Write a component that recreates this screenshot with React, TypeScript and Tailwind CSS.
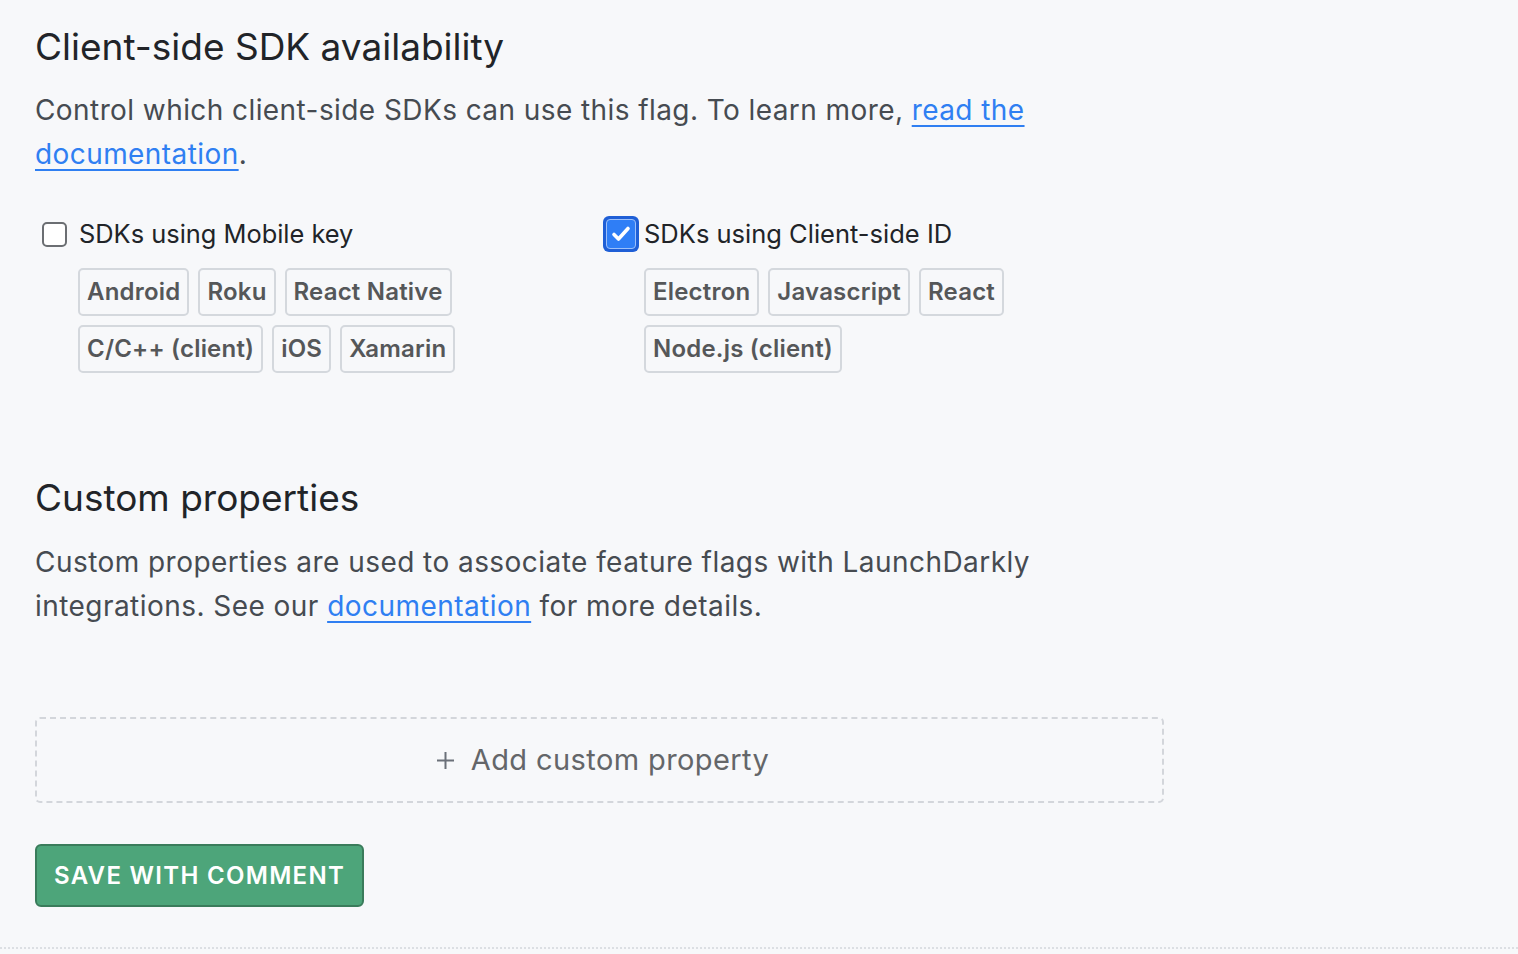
import React from "react";

const Tag = ({ children }: { children: React.ReactNode }) => (
  <span className="inline-flex h-[48px] items-center rounded-[5px] border-2 border-[#d4d8dd] px-[7px] text-[24px] font-semibold tracking-[0.2px] text-[#555759]">
    {children}
  </span>
);

export default function App() {
  return (
    <div
      className="min-h-screen bg-[#f7f8fa] pl-[35px] pt-[25px]"
      style={{ fontFamily: "Inter, 'Noto Sans', sans-serif" }}
    >
      <h2 className="text-[37px] leading-[44px] font-normal text-[#212428]">Client-side SDK availability</h2>
      <p className="mt-[19px] w-[1050px] text-[28px] leading-[44px] tracking-[0.42px] text-[#464b51]">
        Control which client-side SDKs can use this flag. To learn more,{" "}
        <a className="text-[#2f7ff2] underline underline-offset-[5px] decoration-2" href="#">read the documentation</a>.
      </p>

      <div className="mt-[40px] flex">
        <div className="w-[568px] pl-[7px]">
          <div className="flex h-[36px] items-center gap-[12px]">
            <span className="h-[25px] w-[25px] rounded-[5px] border-2 border-[#6b6e72] bg-white" />
            <span className="text-[25.4px] text-[#212428]">SDKs using Mobile key</span>
          </div>
          <div className="ml-[36px] mt-[16px] flex flex-col gap-[9px]">
            <div className="flex gap-[9px]">
              <Tag>Android</Tag>
              <Tag>Roku</Tag>
              <Tag>React Native</Tag>
            </div>
            <div className="flex gap-[9px]">
              <Tag>C/C++ (client)</Tag>
              <Tag>iOS</Tag>
              <Tag>Xamarin</Tag>
            </div>
          </div>
        </div>
        <div>
          <div className="flex h-[36px] items-center gap-[5px]">
            <span className="flex h-[36px] w-[36px] items-center justify-center rounded-[6px] bg-[#1f5fd6] p-[3px]">
              <span className="flex h-full w-full items-center justify-center rounded-[4px] border border-[#9cc0fa] bg-[#2f7ef6]">
                <svg width="24" height="24" viewBox="0 0 24 24" fill="none">
                  <path d="M5 12.5l4.5 4.5L19 6.5" stroke="white" strokeWidth="3.6" strokeLinecap="round" strokeLinejoin="round" />
                </svg>
              </span>
            </span>
            <span className="text-[25.5px] text-[#212428]">SDKs using Client-side ID</span>
          </div>
          <div className="ml-[41px] mt-[16px] flex flex-col gap-[9px]">
            <div className="flex gap-[9px]">
              <Tag>Electron</Tag>
              <Tag>Javascript</Tag>
              <Tag>React</Tag>
            </div>
            <div className="flex gap-[9px]">
              <Tag>Node.js (client)</Tag>
            </div>
          </div>
        </div>
      </div>

      <h2 className="mt-[103px] text-[37px] leading-[44px] font-normal text-[#212428]">Custom properties</h2>
      <p className="mt-[20px] w-[1050px] text-[28px] leading-[44px] tracking-[0.45px] text-[#464b51]">
        Custom properties are used to associate feature flags with LaunchDarkly integrations. See our{" "}
        <a className="text-[#2f7ff2] underline underline-offset-[5px] decoration-2" href="#">documentation</a> for more details.
      </p>

      <button className="mt-[89px] flex h-[86px] w-[1129px] items-center justify-center gap-[16px] rounded-[5px] border-2 border-dashed border-[#d3d6db] pl-[6px] text-[29px] tracking-[0.4px] text-[#646669]">
        <svg width="19" height="19" viewBox="0 0 19 19" fill="none">
          <path d="M9.5 1v17M1 9.5h17" stroke="#6b7079" strokeWidth="2" />
        </svg>
        <span>Add custom property</span>
      </button>

      <button className="mt-[41px] flex h-[63px] items-center rounded-[6px] border-2 border-[#3a7c5b] bg-[#4da57a] px-[17px] text-[24px] font-semibold tracking-[1.3px] text-white">
        SAVE WITH COMMENT
      </button>

      <div className="mt-[40px] -ml-[35px] border-t-2 border-dotted border-[#dcdfe3]" />
    </div>
  );
}
